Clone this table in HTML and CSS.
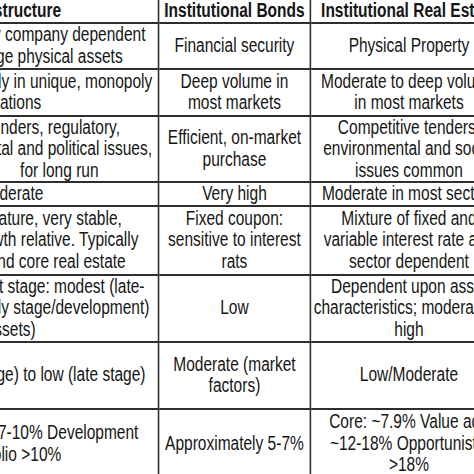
FILE: index.html
```html
<!DOCTYPE html>
<html>
<head>
<meta charset="utf-8">
<link rel="stylesheet" href="styles.css">
</head>
<body>
<div class="frame">
<table class="grid">
  <colgroup>
    <col class="c1">
    <col class="c2">
    <col class="c3">
  </colgroup>
  <tr class="r0">
    <th>Infrastructure</th>
    <th>Institutional Bonds</th>
    <th>Institutional Real Estate</th>
  </tr>
  <tr class="r1">
    <td>Cash flows mostly company dependent<br>Long-lived, large physical assets</td>
    <td>Financial security</td>
    <td>Physical Property</td>
  </tr>
  <tr class="r2">
    <td>Low supply, typically in unique, monopoly<br>locations</td>
    <td>Deep volume in<br>most markets</td>
    <td>Moderate to deep volume<br>in most markets</td>
  </tr>
  <tr class="r3">
    <td>Competitive tenders, regulatory,<br>Legal, environmental and political issues,<br>contracts&nbsp;&nbsp;&nbsp;&nbsp;&nbsp;&nbsp;&nbsp;&nbsp;for long run</td>
    <td>Efficient, on-market<br>purchase</td>
    <td>Competitive tenders,<br>environmental and social<br>issues common</td>
  </tr>
  <tr class="r4">
    <td>Moderate</td>
    <td>Very high</td>
    <td>Moderate in most sectors</td>
  </tr>
  <tr class="r5">
    <td>Predictable, mature, very stable,<br>modest, low growth relative. Typically<br>above bonds and core real estate</td>
    <td>Fixed coupon:<br>sensitive to interest<br>rats</td>
    <td>Mixture of fixed and<br>variable interest rate and<br>sector dependent</td>
  </tr>
  <tr class="r6">
    <td>Varies with market stage: modest (late-<br>stage) to high (early stage/development)<br>assets)</td>
    <td>Low</td>
    <td>Dependent upon asset<br>characteristics; moderate to<br>high</td>
  </tr>
  <tr class="r7">
    <td>Highest (early stage) to low (late stage)</td>
    <td>Moderate (market<br>factors)</td>
    <td>Low/Moderate</td>
  </tr>
  <tr class="r8">
    <td>Mature assets: ~7-10% Development<br>Portfolio &gt;10%</td>
    <td>Approximately 5-7%</td>
    <td>Core: ~7.9% Value add<br>~12-18% Opportunistic<br>&gt;18%</td>
  </tr>
</table>
</div>
</body>
</html>
```

FILE: styles.css
```css
html, body {
  margin: 0;
  padding: 0;
  background: #ffffff;
}

.frame {
  width: 474px;
  height: 474px;
  overflow: hidden;
}

.grid {
  border-collapse: collapse;
  table-layout: fixed;
  width: 811px;
  margin-left: -138px;
  margin-top: -4px;
  transform: scaleX(0.795);
  transform-origin: 0 0;
  font-family: "Liberation Sans", Arial, Helvetica, sans-serif;
  font-size: 19.5px;
  line-height: 21.5px;
  color: #151515;
}

.c1 { width: 372px; }
.c2 { width: 191px; }
.c3 { width: 248px; }

.grid th,
.grid td {
  border: 2px solid #2e2e2e;
  padding: 0 2px;
  text-align: center;
  vertical-align: middle;
  white-space: nowrap;
  overflow: hidden;
}

.grid th {
  font-weight: bold;
  padding-top: 2px;
}

.r0 th { height: 19px; }
.r1 td { height: 44px; }
.r2 td { height: 45px; }
.r3 td { height: 64px; }
.r4 td { height: 21px; }
.r5 td { height: 67px; }
.r6 td { height: 65px; }
.r7 td { height: 65px; }
.r8 td { height: 68px; }
```
